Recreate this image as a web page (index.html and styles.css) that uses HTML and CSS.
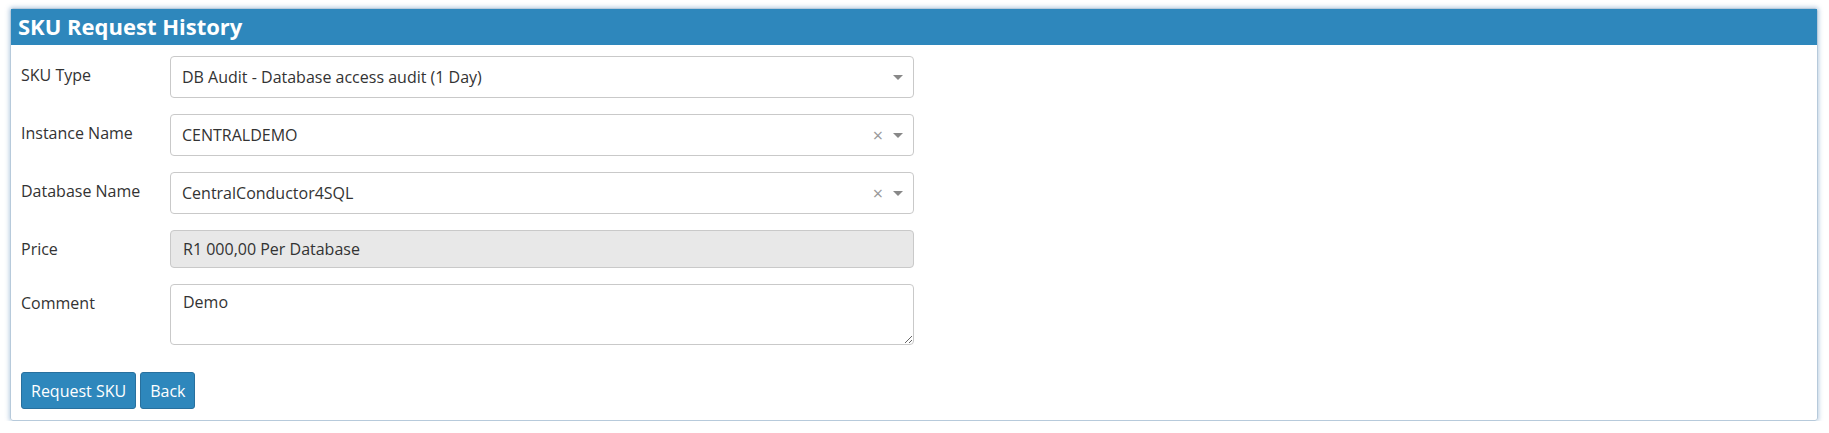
FILE: index.html
```html
<!DOCTYPE html>
<html>
<head>
<meta charset="utf-8">
<link rel="stylesheet" href="styles.css">
</head>
<body>
<div class="panel">
  <div class="panel-head">SKU Request History</div>
  <div class="panel-body">
    <div class="row">
      <div class="label">SKU Type</div>
      <div class="select">
        <span class="value">DB Audit - Database access audit (1 Day)</span>
        <span class="arrow"></span>
      </div>
    </div>
    <div class="row">
      <div class="label">Instance Name</div>
      <div class="select">
        <span class="value">CENTRALDEMO</span>
        <span class="clear">×</span>
        <span class="arrow"></span>
      </div>
    </div>
    <div class="row">
      <div class="label">Database Name</div>
      <div class="select">
        <span class="value">CentralConductor4SQL</span>
        <span class="clear">×</span>
        <span class="arrow"></span>
      </div>
    </div>
    <div class="row">
      <div class="label">Price</div>
      <div class="readonly">R1 000,00 Per Database</div>
    </div>
    <div class="row">
      <div class="label">Comment</div>
      <textarea class="comment">Demo</textarea>
    </div>
    <div class="actions">
      <button class="btn">Request SKU</button>
      <button class="btn">Back</button>
    </div>
  </div>
</div>
</body>
</html>
```
FILE: styles.css
```css
html, body {
  margin: 0;
  padding: 0;
  background: #fff;
}
body {
  font-family: "Open Sans", "Noto Sans", sans-serif;
  font-size: 16px;
  color: #333;
}
.panel {
  margin: 8px 9px 0 10px;
  width: 1808px;
  border: 1px solid #b7cadb;
  border-radius: 3px;
  box-shadow: 0 0 4px 1px rgba(120, 160, 200, 0.5);
  height: 413px;
  box-sizing: border-box;
}
.panel-head {
  background: #2e87bc;
  color: #fff;
  font-weight: 700;
  font-size: 22px;
  height: 36px;
  line-height: 34px;
  padding-left: 7px;
}
.panel-body {
  padding: 11px 10px 0 10px;
}
.row {
  display: flex;
  align-items: flex-start;
  margin-bottom: 16px;
}
.label {
  width: 149px;
  padding-top: 9px;
  line-height: 20px;
}
.select {
  width: 744px;
  height: 42px;
  box-sizing: border-box;
  border: 1px solid #c9c9c9;
  border-radius: 4px;
  display: flex;
  align-items: center;
  padding: 0 10px 0 11px;
}
.value {
  flex: 1;
  color: #333;
}
.clear {
  color: #999;
  font-size: 18px;
  margin-right: 10px;
  line-height: 1;
}
.arrow {
  width: 0;
  height: 0;
  border-style: solid;
  border-width: 5px 5px 0 5px;
  border-color: #888 transparent transparent transparent;
}
.readonly {
  width: 744px;
  height: 38px;
  box-sizing: border-box;
  border: 1px solid #c9c9c9;
  border-radius: 4px;
  background: #e8e8e8;
  padding: 0 12px;
  line-height: 36px;
}
.comment {
  width: 744px;
  height: 61px;
  box-sizing: border-box;
  border: 1px solid #c9c9c9;
  border-radius: 4px;
  padding: 6px 12px;
  font-family: inherit;
  font-size: 16px;
  color: #333;
  margin: 0;
  resize: both;
}
.actions {
  display: flex;
  gap: 4px;
  padding-top: 11px;
}
.btn {
  background: #2e87bc;
  color: #fff;
  border: 1px solid #28709e;
  border-radius: 3px;
  height: 37px;
  padding: 0 9px;
  font-family: inherit;
  font-size: 16px;
}
```
